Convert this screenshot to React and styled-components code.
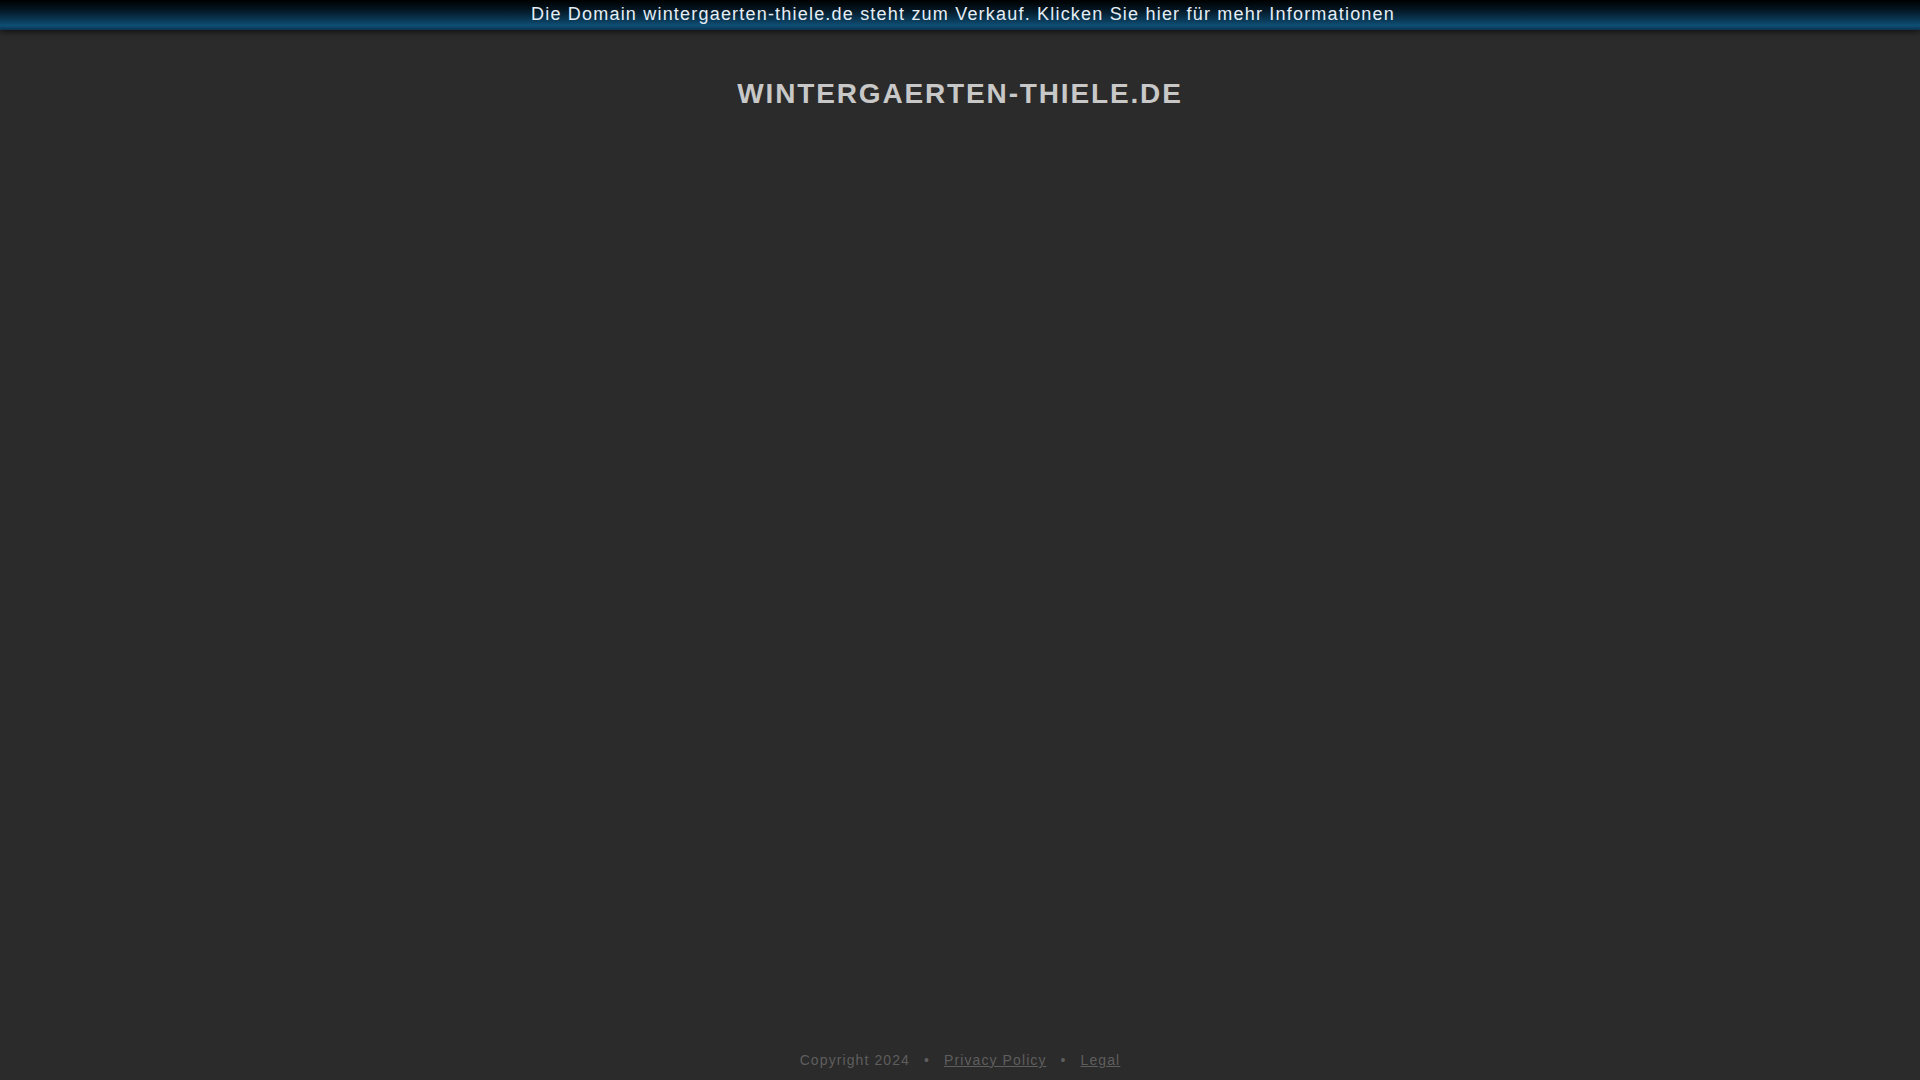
import React from "react";
import styled, { createGlobalStyle } from "styled-components";

const Global = createGlobalStyle`
  html, body { margin: 0; padding: 0; height: 100%; }
  body {
    background: #2b2b2b;
    font-family: "Liberation Sans", Arial, sans-serif;
  }
  #root { min-height: 100vh; }
`;

const Page = styled.div`
  min-height: 100vh;
  display: flex;
  flex-direction: column;
  align-items: stretch;
`;

const TopBar = styled.a`
  display: flex;
  align-items: center;
  justify-content: center;
  height: 30px;
  padding: 0 0 2px 6px;
  box-sizing: border-box;
  background: linear-gradient(to bottom, #000000 0%, #03141f 30%, #0b3d5c 70%, #0f4e75 85%, #0a3450 100%);
  box-shadow: 0 2px 6px rgba(0, 0, 0, 0.6);
  color: #e6eef5;
  font-size: 18px;
  letter-spacing: 1.2px;
  text-decoration: none;
  cursor: pointer;
  position: relative;
  z-index: 1;
`;

const Title = styled.h1`
  margin: 0;
  padding-top: 46px;
  text-align: center;
  color: #c8c8c8;
  font-size: 28px;
  font-weight: bold;
  letter-spacing: 1.85px;
  line-height: 36px;
`;

const Spacer = styled.div`
  flex: 1;
`;

const Footer = styled.footer`
  display: flex;
  justify-content: center;
  align-items: center;
  padding-bottom: 11px;
  color: #5e5e5e;
  font-size: 14px;
  letter-spacing: 1.1px;
  line-height: 18px;
`;

const Dot = styled.span`
  margin: 0 14px;
`;

const FooterLink = styled.a`
  color: #5e5e5e;
  text-decoration: underline;
`;

export default function App() {
  return (
    <Page>
      <Global />
      <TopBar>
        Die Domain wintergaerten-thiele.de steht zum Verkauf. Klicken Sie hier für mehr Informationen
      </TopBar>
      <Title>WINTERGAERTEN-THIELE.DE</Title>
      <Spacer />
      <Footer>
        <span>Copyright 2024</span>
        <Dot>•</Dot>
        <FooterLink href="#">Privacy Policy</FooterLink>
        <Dot>•</Dot>
        <FooterLink href="#">Legal</FooterLink>
      </Footer>
    </Page>
  );
}
